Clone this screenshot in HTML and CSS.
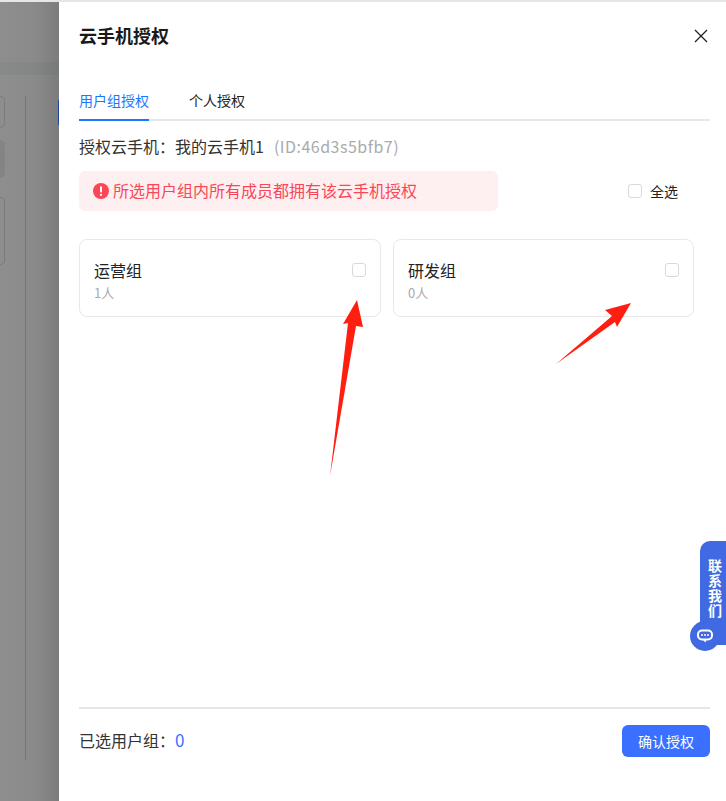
FILE: index.html
```html
<!DOCTYPE html>
<html lang="zh-CN">
<head>
<meta charset="UTF-8" />
<meta name="viewport" content="width=device-width, initial-scale=1" />
<title>云手机授权</title>
<link rel="stylesheet" href="styles.css">
</head>
<body>

<div class="page">
  <aside class="backdrop">
    <div class="bg-band"></div>
    <div class="bg-body">
      <div class="bg-list">
        <div class="bg-box bg-box-a"></div>
        <div class="bg-box bg-box-b"></div>
        <div class="bg-box bg-box-c"></div>
      </div>
      <div class="bg-line"></div>
    </div>
    <div class="bg-mark"></div>
  </aside>

  <section class="drawer">
    <header class="drawer-head">
      <h1>云手机授权</h1>
      <button class="btn-close" aria-label="关闭">
        <svg width="14" height="14" viewBox="0 0 14 14"><path d="M1 1 13 13M13 1 1 13" stroke="#222" stroke-width="1.3" fill="none"/></svg>
      </button>
    </header>

    <nav class="tabs">
      <a class="tab active">用户组授权</a>
      <a class="tab">个人授权</a>
    </nav>

    <p class="phone-info">授权云手机：我的云手机1<span class="phone-id">(ID:46d3s5bfb7)</span></p>

    <div class="notice-row">
      <div class="notice">
        <svg width="16" height="16" viewBox="0 0 16 16"><circle cx="8" cy="8" r="8" fill="#fb4658"/><rect x="7" y="3.2" width="2" height="6.4" rx="1" fill="#fff"/><circle cx="8" cy="11.8" r="1.15" fill="#fff"/></svg>
        <span>所选用户组内所有成员都拥有该云手机授权</span>
      </div>
      <label class="check-all"><span class="check"></span>全选</label>
    </div>

    <div class="groups">
      <article class="group">
        <div>
          <h3>运营组</h3>
          <p>1人</p>
        </div>
        <span class="check"></span>
      </article>
      <article class="group">
        <div>
          <h3>研发组</h3>
          <p>0人</p>
        </div>
        <span class="check"></span>
      </article>
    </div>

    <footer class="drawer-foot">
      <div class="selected">已选用户组：<span class="count">0</span></div>
      <button class="btn-confirm">确认授权</button>
    </footer>
  </section>

  <!-- red arrows drawn over the screenshot -->
  <svg class="arrows" width="726" height="801" viewBox="0 0 726 801">
    <path d="M330 476 348 323 343 324 357 300 363 327 356 326Z" fill="#ff1f10"/>
    <path d="M556 364 612 316 605 310 631 303 617 327 615 322Z" fill="#ff1f10"/>
  </svg>

  <div class="contact">
    <div class="contact-tab">联系我们</div>
    <div class="contact-icon">
      <svg width="18" height="14" viewBox="0 0 18 14"><rect x="2" y="1.500" width="14" height="9" rx="4" fill="none" stroke="#fff" stroke-width="2"/><path d="M6.500 10.500 9.500 13.500 10.500 10.500Z" fill="#fff"/><circle cx="6" cy="6" r="1" fill="#fff"/><circle cx="9" cy="6" r="1" fill="#fff"/><circle cx="12" cy="6" r="1" fill="#fff"/></svg>
    </div>
  </div>
</div>

</body>
</html>
```

FILE: styles.css
```css
* {
  box-sizing: border-box;
  margin: 0;
  padding: 0;
}

html, body {
  height: 100%;
  overflow: hidden;
}

body {
  background: #fff;
  color: #222;
  font-family: "Noto Sans CJK SC", "Liberation Sans", sans-serif;
}

.page {
  position: relative;
  display: flex;
  width: 726px;
  height: 801px;
  border-top: 2px solid #e6e6e6;
}

/* dimmed page behind the drawer */
.backdrop {
  position: relative;
  width: 59px;
  flex-shrink: 0;
  padding-top: 60px;
  background: linear-gradient(90deg, #8e8e8e 0, #8a8a8a 35px, #7c7c7c 59px);
}

.bg-band {
  height: 13px;
  background: rgba(60, 64, 70, 0.07);
}

.bg-body {
  display: flex;
  margin-top: 21px;
  height: 664px;
}

.bg-list {
  width: 25px;
  display: flex;
  flex-direction: column;
  gap: 12px;
}

.bg-box {
  width: 5px;
  border: 1px solid #7b7b7b;
  border-left: 0;
  border-radius: 0 5px 5px 0;
}

.bg-box-a {
  height: 32px;
}

.bg-box-b {
  height: 38px;
  border: 0;
  background: #848484;
  margin-bottom: 7px;
}

.bg-box-c {
  height: 68px;
}

.bg-line {
  width: 1px;
  background: #767676;
}

.bg-mark {
  position: absolute;
  right: 0;
  top: 98px;
  width: 1px;
  height: 25px;
  background: #1e46a8;
}

.drawer {
  flex: 1;
  display: flex;
  flex-direction: column;
  padding: 0 16px 0 20px;
  background: #fff;
}

.drawer-head {
  display: flex;
  align-items: center;
  justify-content: space-between;
  height: 68px;
}

.drawer-head h1 {
  font-size: 18px;
  line-height: 24px;
  margin-top: -2px;
  font-weight: 700;
  color: #1a1a1a;
}

.btn-close {
  display: flex;
  margin-right: 2px;
  background: none;
  border: none;
  cursor: pointer;
}

.tabs {
  display: flex;
  gap: 40px;
  margin-top: 14px;
  height: 37px;
  border-bottom: 2px solid #e4e8ee;
}

.tab {
  height: 37px;
  font-size: 14px;
  line-height: 32px;
  color: #222;
}

.tab.active {
  color: #1a77ff;
  border-bottom: 2px solid #1a77ff;
}

.phone-info {
  margin-top: 12px;
  font-size: 16px;
  line-height: 26px;
  color: #333;
}

.phone-id {
  margin-left: 10px;
  letter-spacing: 0.5px;
  color: #aaa;
}

.notice-row {
  display: flex;
  align-items: center;
  justify-content: space-between;
  margin-top: 12px;
}

.notice {
  display: flex;
  align-items: center;
  gap: 4px;
  width: 419px;
  height: 40px;
  padding-left: 14px;
  background: #feeff0;
  border-radius: 6px;
  font-size: 16px;
  color: #fb4658;
}

.notice span {
  line-height: 38px;
  height: 40px;
}

.check {
  display: block;
  width: 14px;
  height: 14px;
  background: #fff;
  border: 1px solid #d9d9d9;
  border-radius: 3px;
}

.check-all {
  display: flex;
  align-items: center;
  gap: 8px;
  margin-right: 32px;
  font-size: 14px;
  line-height: 18px;
  padding-bottom: 1px;
  color: #222;
}

.groups {
  display: grid;
  grid-template-columns: 302px 301px;
  gap: 12px;
  margin-top: 28px;
}

.group {
  display: flex;
  justify-content: space-between;
  height: 78px;
  padding: 19px 14px;
  border: 1px solid #e8e8e8;
  border-radius: 8px;
}

.group .check {
  margin-top: 4px;
}

.group h3 {
  font-size: 16px;
  font-weight: 400;
  line-height: 22px;
  color: #222;
}

.group p {
  margin-top: 4px;
  font-size: 13px;
  line-height: 16px;
  color: #aaa;
}

.drawer-foot {
  display: flex;
  align-items: center;
  justify-content: space-between;
  margin-top: auto;
  height: 94px;
  padding: 0 0 28px;
  border-top: 2px solid #e6e6ea;
}

.selected {
  margin-bottom: 3px;
  font-size: 16px;
  color: #333;
}

.count {
  color: #3a72ff;
  font-size: 17px;
}

.btn-confirm {
  width: 88px;
  height: 32px;
  background: #3a6fff;
  border: none;
  border-radius: 6px;
  color: #fff;
  font-family: inherit;
  font-size: 14px;
  cursor: pointer;
}

.arrows {
  position: absolute;
  left: 0;
  top: -2px;
  pointer-events: none;
}

/* floating contact widget */
.contact {
  position: absolute;
  right: 0;
  top: 539px;
  width: 36px;
  height: 112px;
}

.contact-tab {
  position: absolute;
  right: 0;
  top: 0;
  width: 26px;
  height: 104px;
  padding: 17px 4px 0 8px;
  background: #4169e1;
  border-radius: 10px 0 0 0;
  color: #fff;
  font-size: 14px;
  font-weight: 700;
  line-height: 15px;
}

.contact-icon {
  position: absolute;
  left: 0;
  top: 80px;
  display: flex;
  align-items: center;
  justify-content: center;
  width: 30px;
  height: 30px;
  background: #4169e1;
  border-radius: 50%;
}
```
